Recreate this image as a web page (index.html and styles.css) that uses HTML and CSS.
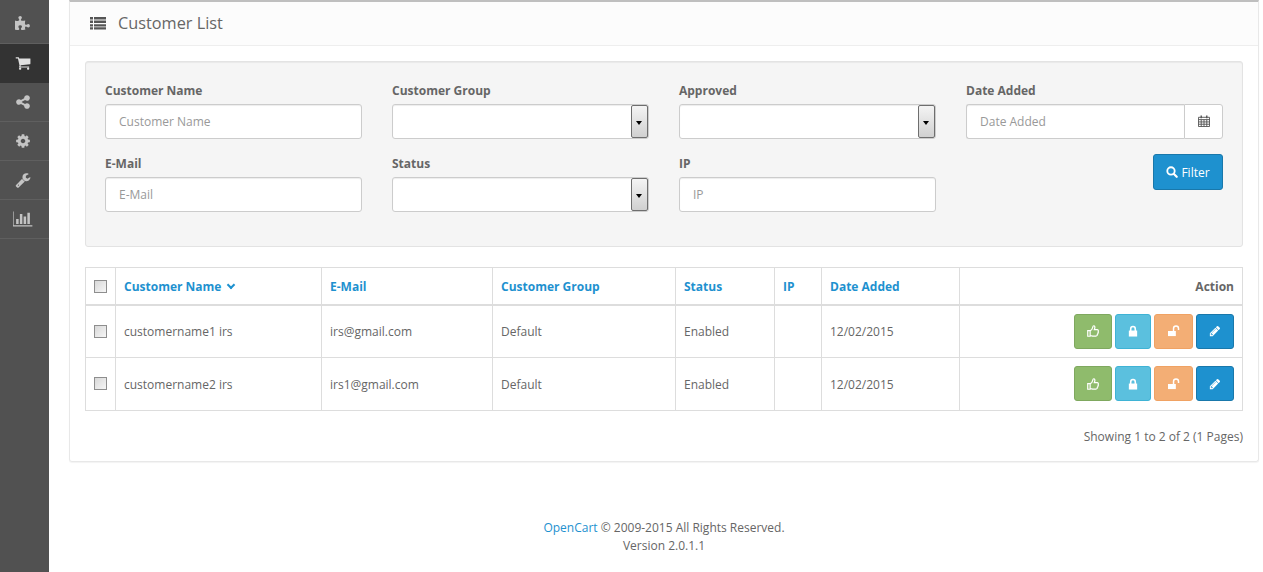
FILE: index.html
```html
<!DOCTYPE html>
<html>
  <head>
    <title>Customer List</title>
    <link rel="stylesheet" href="styles.css">
  </head>
  <body>
    <svg class="sprites" xmlns="http://www.w3.org/2000/svg">
      <symbol id="i-puzzle" viewBox="0 0 1792 1792"><path d="M1664 1098q0 81-44.5 135t-123.5 54q-41 0-77.5-17.5t-59-38-56.5-38-71-17.5q-110 0-110 124 0 39 16 115t15 115v5q-22 0-33 1-34 3-97.5 11.5t-115.5 13.5-98 5q-61 0-103-26.5t-42-83.5q0-37 17.5-71t38-56.5 38-59 17.5-77.5q0-79-54-123.5t-135-44.5q-84 0-143 45.5t-59 127.5q0 43 15 83t33.5 64.5 33.5 53 15 50.5q0 45-46 89-37 35-117 35-95 0-245-24-9-2-27.5-4t-27.5-4l-13-2q-2 0-5-1-3-1-5-1v-1024q2 1 17.5 3.5t34 5 21.5 3.5q150 24 245 24 80 0 117-35 46-44 46-89 0-22-15-50.5t-33.5-53-33.5-64.5-15-83q0-82 59-127.5t144-45.5q80 0 134 44.5t54 123.5q0 41-17.5 77.5t-38 59-38 56.5-17.5 71q0 57 42 83.5t103 26.5q64 0 180-15t163-17v2q-1 2-3.5 17.5t-5 34-3.5 21.5q-24 150-24 245 0 80 35 117 44 46 89 46 22 0 50.5-15t53-33.5 64.5-33.5 83-15q82 0 127.5 59t45.5 143z"/></symbol>
      <symbol id="i-cart" viewBox="0 0 1792 1792"><path d="M704 1536q0 52-38 90t-90 38-90-38-38-90 38-90 90-38 90 38 38 90zm896 0q0 52-38 90t-90 38-90-38-38-90 38-90 90-38 90 38 38 90zm128-1088v512q0 24-16.5 42.5t-40.5 21.5l-1044 122q13 60 13 70 0 16-24 64h920q26 0 45 19t19 45-19 45-45 19h-1024q-26 0-45-19t-19-45q0-11 8-31.5t16-36 21.5-40 15.5-29.5l-177-823h-204q-26 0-45-19t-19-45 19-45 45-19h256q16 0 28.5 6.5t19.5 15.5 13 24.5 8 26 5.5 29.5 4.5 26h1201q26 0 45 19t19 45z"/></symbol>
      <symbol id="i-share" viewBox="0 0 1792 1792"><path d="M1344 1024q133 0 226.5 93.5t93.5 226.5-93.5 226.5-226.5 93.5-226.5-93.5-93.5-226.5q0-12 2-34l-360-180q-92 86-218 86-133 0-226.5-93.5t-93.5-226.5 93.5-226.5 226.5-93.5q126 0 218 86l360-180q-2-22-2-34 0-133 93.5-226.5t226.5-93.5 226.5 93.5 93.5 226.5-93.5 226.5-226.5 93.5q-126 0-218-86l-360 180q2 22 2 34t-2 34l360 180q92-86 218-86z"/></symbol>
      <symbol id="i-cog" viewBox="0 0 1792 1792"><path d="M1152 896q0-106-75-181t-181-75-181 75-75 181 75 181 181 75 181-75 75-181zm512-109v222q0 12-8 23t-20 13l-185 28q-19 54-39 91 35 50 107 138 10 12 10 25t-9 23q-27 37-99 108t-94 71q-12 0-26-9l-138-108q-44 23-91 38-16 136-29 186-7 28-36 28h-222q-14 0-24.5-8.5t-11.5-21.5l-28-184q-49-16-90-37l-141 107q-10 9-25 9-14 0-25-11-126-114-165-168-7-10-7-23 0-12 8-23 15-21 51-66.5t54-70.5q-27-50-41-99l-183-27q-13-2-21-12.5t-8-23.5v-222q0-12 8-23t19-13l186-28q14-46 39-92-40-57-107-138-10-12-10-24 0-10 9-23 26-36 98.5-107.5t94.5-71.5q13 0 26 10l138 107q44-23 91-38 16-136 29-186 7-28 36-28h222q14 0 24.5 8.5t11.5 21.5l28 184q49 16 90 37l142-107q9-9 24-9 13 0 25 10 129 119 165 170 7 8 7 22 0 12-8 23-15 21-51 66.5t-54 70.5q26 50 41 98l183 28q13 2 21 12.5t8 23.5z"/></symbol>
      <symbol id="i-wrench" viewBox="0 0 1792 1792"><path fill-rule="evenodd" d="M448 1472q0-26-19-45t-45-19-45 19-19 45 19 45 45 19 45-19 19-45zm644-420l-682 682q-37 37-90 37-52 0-91-37l-106-108q-38-36-38-90 0-53 38-91l681-681q39 98 114.5 173.5t173.5 114.5zm634-435q0 39-23 106-47 134-164.5 217.5t-258.5 83.5q-185 0-316.5-131.5t-131.5-316.5 131.5-316.5 316.5-131.5q58 0 121.5 16.5t107.5 46.5q16 11 16 28t-16 28l-293 169v224l193 107q5-3 79-48.5t135.5-81 70.5-35.5q15 0 23.5 10t8.5 25z"/></symbol>
      <symbol id="i-chart" viewBox="0 0 2048 1792"><path d="M576 896v512h-256v-512h256zm384-512v1024h-256v-1024h256zm1024 1152v128h-2048v-1536h128v1408h1920zm-640-896v768h-256v-768h256zm384-384v1152h-256v-1152h256z"/></symbol>
      <symbol id="i-list" viewBox="0 0 16 14"><path d="M0 1h3v2.4H0zM0 4.600h3V7H0zM0 8.200h3v2.400H0zM0 11.200h3v2.400H0zM4 1h12v2.400H4zM4 4.600h12V7H4zM4 8.200h12v2.400H4zM4 11.200h12v2.400H4z"/></symbol>
      <symbol id="i-calendar" viewBox="0 0 13 13"><path fill="none" stroke="currentColor" d="M.5 2.500h12v10H.5zM.5 5h12M.5 7.500h12M.5 10h12M3.500 5v7.500M6.500 5v7.500M9.500 5v7.500"/><path stroke="currentColor" stroke-width="1.500" d="M3.500 .5v3M9.500 .5v3"/></symbol>
      <symbol id="i-search" viewBox="0 0 13 13"><circle cx="5.400" cy="5.400" r="4" fill="none" stroke="currentColor" stroke-width="2"/><path stroke="currentColor" stroke-width="2.400" stroke-linecap="round" d="M8.600 8.600l3 3"/></symbol>
      <symbol id="i-thumb" viewBox="0 0 13 13"><path fill="none" stroke="currentColor" stroke-width="1.300" d="M.8 6h2.600v6.200H.8zM3.400 6.200c1.400-.6 2.400-2 2.700-3.400.2-1 .3-2 1.200-2 1.200 0 1.500 1.400 1 3L7.900 5h3.200c1 0 1.400 1 1 1.700.4.7.2 1.400-.3 1.800.2.7 0 1.300-.6 1.600.1.900-.4 1.900-1.500 1.900H6.800c-1.300 0-2-.6-3.400-.6"/></symbol>
      <symbol id="i-lock" viewBox="0 0 13 13"><path d="M2 6h9v6.500H2z"/><path fill="none" stroke="currentColor" stroke-width="1.700" d="M4 6.500V4.200a2.500 2.500 0 0 1 5 0v2.300"/></symbol>
      <symbol id="i-unlock" viewBox="0 0 13 13"><path d="M0 6.500h8.500V12H0z"/><path fill="none" stroke="currentColor" stroke-width="1.600" d="M6 6.500V3.800a2.700 2.700 0 0 1 5.400 0V5.500"/></symbol>
      <symbol id="i-pencil" viewBox="0 0 1792 1792"><path d="M491 1536l91-91-235-235-91 91v107h128v128h107zm523-928q0-22-22-22-10 0-17 7l-542 542q-7 7-7 17 0 22 22 22 10 0 17-7l542-542q7-7 7-17zm-54-192l416 416-832 832h-416v-416zm683 96q0 53-37 90l-166 166-416-416 166-165q36-38 90-38 53 0 91 38l235 234q37 39 37 91z"/></symbol>
    </svg>

    <div class="page">
      <nav class="sidebar">
        <a class="side-item"><svg class="side-icon"><use href="#i-puzzle"/></svg></a>
        <a class="side-item active"><svg class="side-icon"><use href="#i-cart"/></svg></a>
        <a class="side-item"><svg class="side-icon"><use href="#i-share"/></svg></a>
        <a class="side-item"><svg class="side-icon"><use href="#i-cog"/></svg></a>
        <a class="side-item"><svg class="side-icon"><use href="#i-wrench"/></svg></a>
        <a class="side-item"><svg class="side-icon chart"><use href="#i-chart"/></svg></a>
      </nav>

      <div class="content">
        <div class="panel">
          <div class="panel-heading">
            <svg class="list-icon"><use href="#i-list"/></svg>
            <h3 class="panel-title">Customer List</h3>
          </div>
          <div class="panel-body">
            <div class="well">
              <div class="filter-grid">
                <div class="field">
                  <label>Customer Name</label>
                  <input class="control" placeholder="Customer Name">
                </div>
                <div class="field">
                  <label>Customer Group</label>
                  <div class="select-box"><select class="control"></select><span class="select-arrow"></span></div>
                </div>
                <div class="field">
                  <label>Approved</label>
                  <div class="select-box"><select class="control"></select><span class="select-arrow"></span></div>
                </div>
                <div class="field">
                  <label>Date Added</label>
                  <div class="date-group">
                    <input class="control" placeholder="Date Added">
                    <span class="date-btn"><svg class="cal-icon"><use href="#i-calendar"/></svg></span>
                  </div>
                </div>
                <div class="field">
                  <label>E-Mail</label>
                  <input class="control" placeholder="E-Mail">
                </div>
                <div class="field">
                  <label>Status</label>
                  <div class="select-box"><select class="control"></select><span class="select-arrow"></span></div>
                </div>
                <div class="field">
                  <label>IP</label>
                  <input class="control" placeholder="IP">
                </div>
                <div class="field filter-cell">
                  <button class="btn btn-blue btn-filter"><svg class="search-icon"><use href="#i-search"/></svg>Filter</button>
                </div>
              </div>
            </div>

            <table class="list">
              <colgroup>
                <col class="c-check"><col class="c-name"><col class="c-mail"><col class="c-group"><col class="c-status"><col class="c-ip"><col class="c-date"><col>
              </colgroup>
              <thead>
                <tr>
                  <th class="check"><input type="checkbox" class="tick"></th>
                  <th><a>Customer Name</a><span class="chevron"></span></th>
                  <th><a>E-Mail</a></th>
                  <th><a>Customer Group</a></th>
                  <th><a>Status</a></th>
                  <th><a>IP</a></th>
                  <th><a>Date Added</a></th>
                  <th class="right">Action</th>
                </tr>
              </thead>
              <tbody>
                <tr>
                  <td class="check"><input type="checkbox" class="tick"></td>
                  <td>customername1 irs</td>
                  <td>irs@gmail.com</td>
                  <td>Default</td>
                  <td>Enabled</td>
                  <td></td>
                  <td>12/02/2015</td>
                  <td class="right">
                    <div class="actions">
                      <button class="btn btn-green btn-wide"><svg class="act-icon"><use href="#i-thumb"/></svg></button>
                      <button class="btn btn-cyan"><svg class="act-icon"><use href="#i-lock"/></svg></button>
                      <button class="btn btn-orange"><svg class="act-icon"><use href="#i-unlock"/></svg></button>
                      <button class="btn btn-blue btn-wide"><svg class="act-icon"><use href="#i-pencil"/></svg></button>
                    </div>
                  </td>
                </tr>
                <tr>
                  <td class="check"><input type="checkbox" class="tick"></td>
                  <td>customername2 irs</td>
                  <td>irs1@gmail.com</td>
                  <td>Default</td>
                  <td>Enabled</td>
                  <td></td>
                  <td>12/02/2015</td>
                  <td class="right">
                    <div class="actions">
                      <button class="btn btn-green btn-wide"><svg class="act-icon"><use href="#i-thumb"/></svg></button>
                      <button class="btn btn-cyan"><svg class="act-icon"><use href="#i-lock"/></svg></button>
                      <button class="btn btn-orange"><svg class="act-icon"><use href="#i-unlock"/></svg></button>
                      <button class="btn btn-blue btn-wide"><svg class="act-icon"><use href="#i-pencil"/></svg></button>
                    </div>
                  </td>
                </tr>
              </tbody>
            </table>

            <p class="results">Showing 1 to 2 of 2 (1 Pages)</p>
          </div>
        </div>

        <footer class="footer">
          <a>OpenCart</a> &copy; 2009-2015 All Rights Reserved.<br>Version 2.0.1.1
        </footer>
      </div>
    </div>
  </body>
</html>
```

FILE: styles.css
```css
* { box-sizing: border-box; }

html, body { height: 100%; }

body {
  margin: 0;
  font-family: "Open Sans", sans-serif;
  font-size: 12px;
  line-height: 18px;
  color: #666;
  background: #fff;
  overflow: hidden;
}

a { color: #1e91cf; }

.sprites { display: none; }

.page { display: flex; min-height: 100%; }

/* left menu */
.sidebar {
  width: 49px;
  flex-shrink: 0;
  background: #515151;
  padding-top: 5px;
}

.side-item {
  display: flex;
  align-items: center;
  justify-content: center;
  height: 39px;
  padding-right: 4px;
  border-bottom: 1px solid #5f5f5f;
  color: #c4c4c4;
}

.side-item.active { background: #333; border-bottom-color: #333; color: #e0e0e0; }

.side-icon { width: 16px; height: 16px; fill: currentColor; }
.side-icon.chart { width: 20px; height: 18px; }

/* main */
.content { flex: 1; padding-left: 20px; padding-right: 4px; }

.panel {
  border: 1px solid #e8e8e8;
  border-top: 2px solid #bfbfbf;
  border-radius: 0 0 3px 3px;
  box-shadow: 0 1px 1px rgba(0, 0, 0, 0.05);
}

.panel-heading {
  display: flex;
  align-items: center;
  height: 44px;
  padding: 0 20px 2px;
  background: #fcfcfc;
  border-bottom: 1px solid #eee;
}

.list-icon { width: 16px; height: 14px; fill: #555; margin-right: 12px; }

.panel-title {
  margin: 0;
  font-size: 16.3px;
  font-weight: 400;
  color: #666;
}

.panel-body { padding: 15px 15px 15px; }

.well {
  height: 186px;
  padding: 19px;
  background: #f5f5f5;
  border: 1px solid #e3e3e3;
  border-radius: 3px;
  box-shadow: inset 0 1px 1px rgba(0, 0, 0, 0.05);
}

.filter-grid {
  display: grid;
  grid-template-columns: repeat(4, 257px);
  column-gap: 30px;
  row-gap: 15px;
}

.field label {
  display: block;
  height: 23px;
  padding-top: 1px;
  font-weight: 700;
  font-size: 12px;
  line-height: 18px;
  color: #666;
}

.control {
  display: block;
  width: 100%;
  height: 35px;
  padding: 8px 13px;
  font-family: inherit;
  font-size: 12px;
  color: #555;
  background: #fff;
  border: 1px solid #ccc;
  border-radius: 3px;
  box-shadow: inset 0 1px 1px rgba(0, 0, 0, 0.075);
  appearance: none;
}

.control::placeholder { color: #999; }

.select-box { position: relative; }

/* old style native dropdown button */
.select-arrow {
  position: absolute;
  top: 1px;
  right: 1px;
  width: 17px;
  height: 33px;
  border: 1px solid #6e6e6e;
  border-radius: 2px;
  background: linear-gradient(#f4f4f4, #d0d0d0);
}

.select-arrow::after {
  content: "";
  position: absolute;
  top: 15px;
  left: 4px;
  border: 3.5px solid transparent;
  border-top: 4px solid #000;
  border-bottom: 0;
}

.date-group { display: flex; }

.date-group .control { border-radius: 3px 0 0 3px; border-right: 0; }

.date-btn {
  display: flex;
  align-items: center;
  justify-content: center;
  flex: 0 0 39px;
  height: 35px;
  padding-bottom: 2px;
  background: #fff;
  border: 1px solid #ccc;
  border-radius: 0 3px 3px 0;
  color: #555;
}

.cal-icon { width: 12px; height: 12px; }

.filter-cell { display: flex; justify-content: flex-end; align-items: flex-start; }

.btn {
  display: inline-flex;
  align-items: center;
  justify-content: center;
  font-family: inherit;
  font-size: 12px;
  color: #fff;
  border: 1px solid;
  border-radius: 3px;
  padding: 0;
}

.btn-filter { width: 70px; height: 36px; }
.search-icon { width: 12px; height: 12px; margin-right: 3px; }

.btn-blue { background: #1e91cf; border-color: #1978ab; }
.btn-green { background: #8fbb6c; border-color: #7fa85f; }
.btn-cyan { background: #5bc0de; border-color: #3fb3d5; }
.btn-orange { background: #f3ae75; border-color: #f0a263; }

/* table */
.list {
  width: 100%;
  margin-top: 20px;
  border-collapse: collapse;
  table-layout: fixed;
}

.c-check { width: 30px; }
.c-name { width: 206px; }
.c-mail { width: 171px; }
.c-group { width: 183px; }
.c-status { width: 99px; }
.c-ip { width: 47px; }
.c-date { width: 138px; }

.list th, .list td {
  border: 1px solid #ddd;
  padding: 8px;
  text-align: left;
  vertical-align: middle;
}

.list th {
  height: 37px;
  padding-top: 9px;
  padding-bottom: 7px;
  border-bottom-width: 2px;
  font-weight: 700;
}

.list td { height: 53px; padding-top: 10px; }
.list tbody tr:first-child td { height: 52px; }
.list td.right { padding-top: 8px; }

.list .right { text-align: right; }
.list th.check, .list td.check { text-align: center; padding: 0; }

.tick {
  width: 13px;
  height: 13px;
  margin: 0 0 1px;
  vertical-align: middle;
  appearance: none;
  border: 1px solid #8e8e8e;
  background: linear-gradient(135deg, #d8d8d8, #f6f6f6);
}

.chevron {
  display: inline-block;
  width: 6px;
  height: 6px;
  margin: 0 0 3px 7px;
  border-right: 2px solid #1e91cf;
  border-bottom: 2px solid #1e91cf;
  transform: rotate(45deg);
}

.actions { display: flex; justify-content: flex-end; gap: 3px; }

.actions .btn { width: 36px; height: 35px; }
.actions .btn-orange { width: 39px; }
.actions .btn-wide { width: 38px; }

.act-icon { width: 12px; height: 12px; fill: #fff; }

.results { margin: 17px 0 0; text-align: right; }

.footer {
  margin-top: 57px;
  text-align: center;
  line-height: 18px;
}
```
